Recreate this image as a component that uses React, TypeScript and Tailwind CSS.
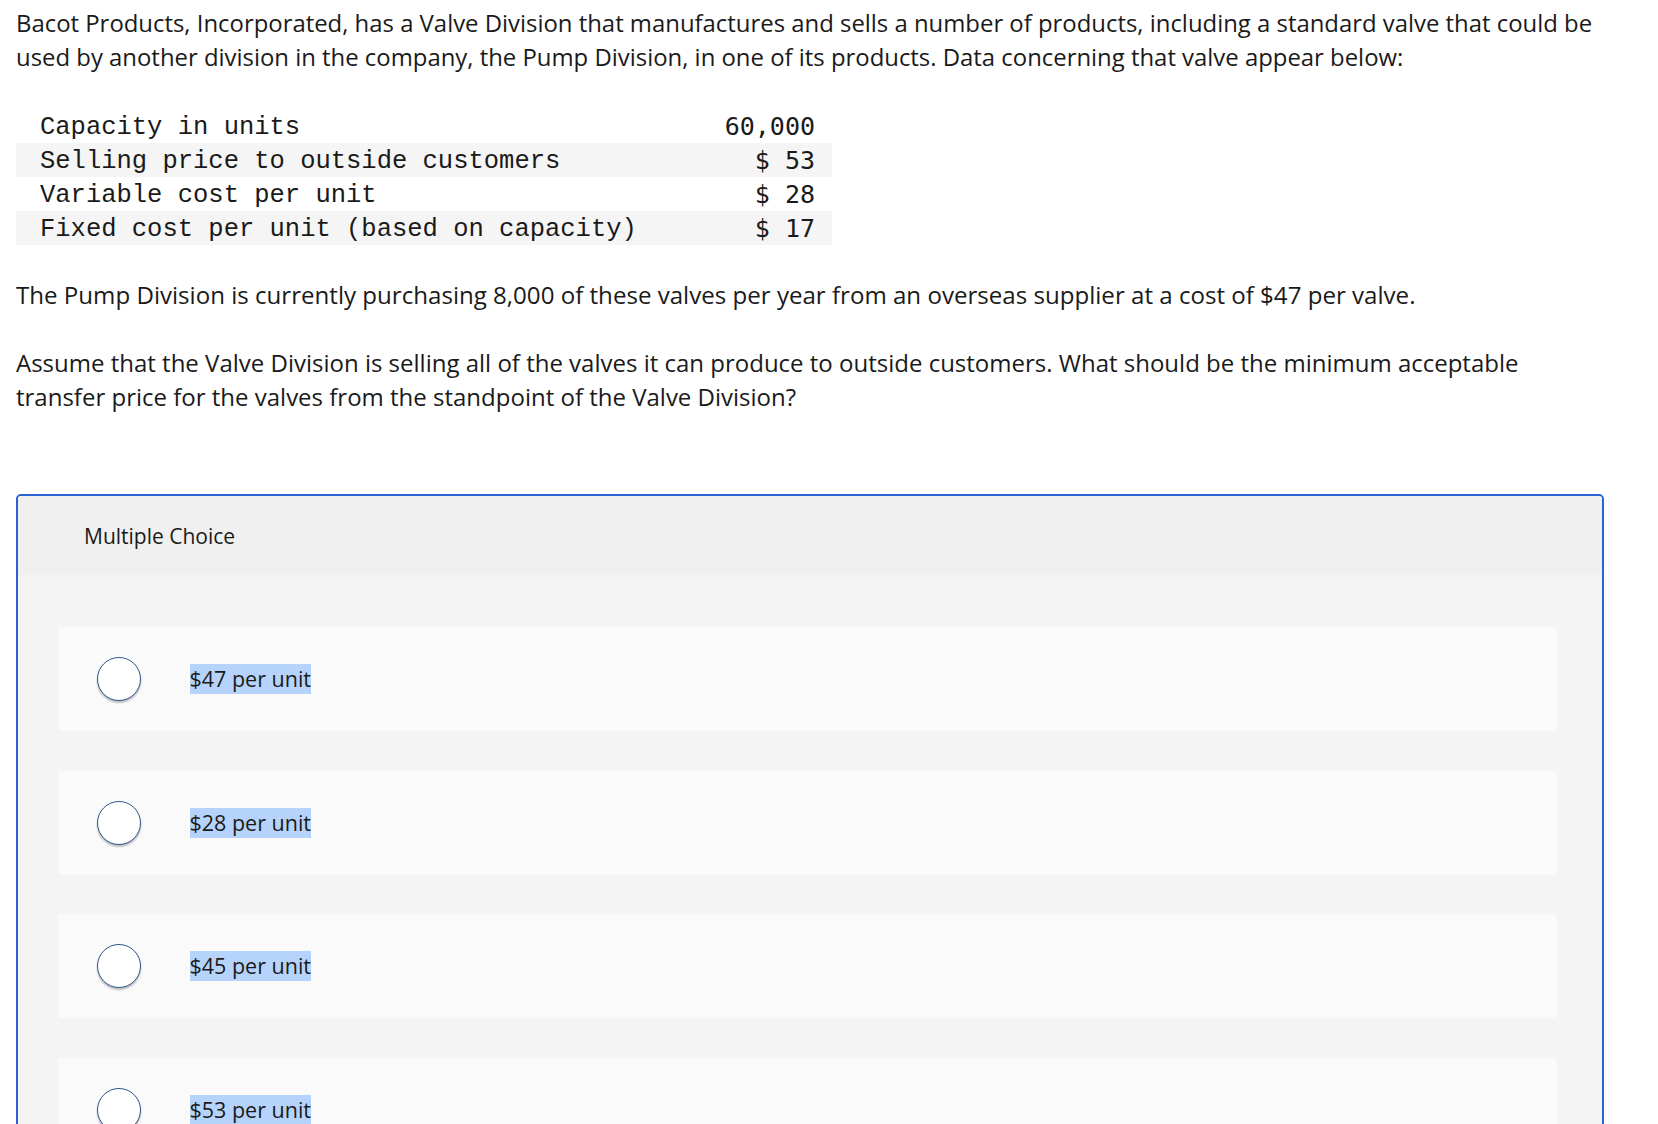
const rows = [
  { label: 'Capacity in units', value: '60,000' },
  { label: 'Selling price to outside customers', value: '$ 53' },
  { label: 'Variable cost per unit', value: '$ 28' },
  { label: 'Fixed cost per unit (based on capacity)', value: '$ 17' },
]

const choices = ['$47 per unit', '$28 per unit', '$45 per unit', '$53 per unit']

export default function App() {
  return (
    <div className="min-h-screen bg-white px-[16px] pt-[6px] font-['Open_Sans',sans-serif] text-[#1a1a1a]">
      <div className="w-[1588px]">
        <p className="text-[23.9px] leading-[34px]">
          Bacot Products, Incorporated, has a Valve Division that manufactures and sells a number of products, including a standard valve that could be
          used by another division in the company, the Pump Division, in one of its products. Data concerning that valve appear below:
        </p>

        <table className="mt-[35px] w-[816px] border-collapse">
          <tbody>
            {rows.map((r, i) => (
              <tr key={r.label} className={i % 2 === 1 ? 'bg-[#f5f5f5]' : ''}>
                <td className="h-[34px] pt-[3px] pl-[24px] font-['Liberation_Mono',monospace] text-[25.5px] leading-[31px] whitespace-pre">
                  {r.label}
                </td>
                <td className="h-[34px] pt-[2px] pr-[17px] text-right font-['DejaVu_Sans_Mono',monospace] text-[25px] leading-[32px] whitespace-pre">
                  {r.value}
                </td>
              </tr>
            ))}
          </tbody>
        </table>

        <p className="mt-[33px] text-[24.1px] leading-[34px]">
          The Pump Division is currently purchasing 8,000 of these valves per year from an overseas supplier at a cost of $47 per valve.
        </p>

        <p className="mt-[34px] text-[24px] leading-[34px]">
          Assume that the Valve Division is selling all of the valves it can produce to outside customers. What should be the minimum acceptable
          transfer price for the valves from the standpoint of the Valve Division?
        </p>

        <div className="mt-[80px] overflow-hidden rounded-[5px] border-[2.5px] border-[#2a62d4] bg-[#f4f4f4]">
          <div className="flex h-[79px] items-center bg-[#f0f0f0] pt-[2px] pl-[66px] text-[21px]">Multiple Choice</div>
          <div className="flex flex-col gap-[39.5px] pt-[52px] pr-[45px] pb-[40px] pl-[40px]">
            {choices.map((c) => (
              <div key={c} className="flex h-[104px] items-center rounded-[4px] bg-[#fafafa] pl-[38.5px]">
                <span className="h-[44px] w-[44px] shrink-0 rounded-full border-[1.5px] border-[#2f578c] bg-white shadow-[0_2px_2px_rgba(0,0,0,0.25)]" />
                <span className="ml-[49px] bg-[#b6d4fb] text-[21.5px] leading-[30px]">{c}</span>
              </div>
            ))}
          </div>
        </div>
      </div>
    </div>
  )
}
